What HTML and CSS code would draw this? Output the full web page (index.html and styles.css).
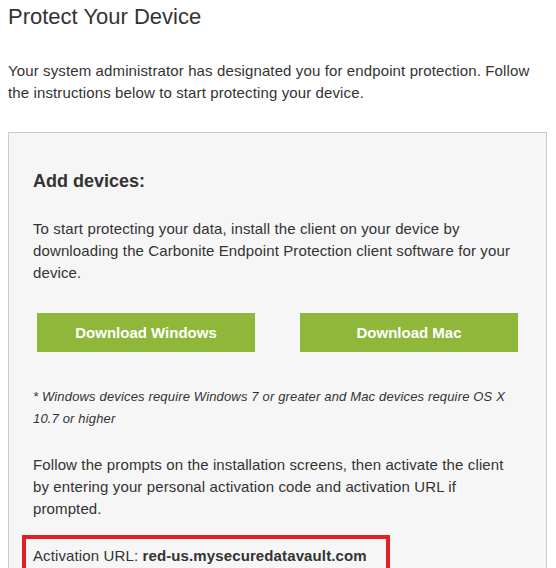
FILE: index.html
```html
<!DOCTYPE html>
<html lang="en">
<head>
  <meta charset="UTF-8">
  <title>Protect Your Device</title>
  <link rel="stylesheet" href="styles.css">
</head>
<body>

  <h1 class="page-title">Protect Your Device</h1>

  <p class="intro">
    Your system administrator has designated you for endpoint protection. Follow
    the instructions below to start protecting your device.
  </p>

  <div class="panel">
    <h2 class="panel-title">Add devices:</h2>

    <p class="step">
      To start protecting your data, install the client on your device by
      downloading the Carbonite Endpoint Protection client software for your
      device.
    </p>

    <div class="downloads">
      <a class="btn" href="#">Download Windows</a>
      <a class="btn" href="#">Download Mac</a>
    </div>

    <p class="note">
      * Windows devices require Windows 7 or greater and Mac devices require OS X
      10.7 or higher
    </p>

    <p class="step step-last">
      Follow the prompts on the installation screens, then activate the client
      by entering your personal activation code and activation URL if
      prompted.
    </p>

    <div class="activation">
      Activation URL: <strong>red-us.mysecuredatavault.com</strong>
    </div>
  </div>

</body>
</html>
```

FILE: styles.css
```css
body {
  margin: 0 8px;
  font-family: "Liberation Sans", Arial, sans-serif;
  font-size: 15px;
  line-height: 22px;
  color: #333;
  background: #fff;
  letter-spacing: 0.12px;
}

.page-title {
  margin: 4px 0 30px 0;
  font-size: 22px;
  line-height: 26px;
  font-weight: normal;
  letter-spacing: 0;
}

.intro {
  margin: 0 0 28px 0;
}

.panel {
  border: 1px solid #cacaca;
  background: #f6f6f6;
  padding: 37px 24px 40px 24px;
  margin-right: 1px;
}

.panel-title {
  margin: 0 0 26px 0;
  font-size: 18px;
  line-height: 22px;
  font-weight: bold;
  letter-spacing: 0;
}

.step {
  margin: 0;
}

.downloads {
  display: flex;
  gap: 45px;
  margin: 29px 0 34px 4px;
}

.btn {
  display: block;
  width: 218px;
  height: 39px;
  line-height: 39px;
  background: #8fb83b;
  color: #fff;
  font-weight: bold;
  text-align: center;
  text-decoration: none;
  letter-spacing: 0;
}

.note {
  margin: 0 0 24px 0;
  font-size: 13px;
  font-style: italic;
  letter-spacing: 0.16px;
}

.step-last {
  margin-bottom: 15px;
}

.activation {
  width: 368px;
  box-sizing: border-box;
  margin-left: -11px;
  padding: 6px 7px 4px 7px;
  border: 4px solid #e31e26;
}
```
